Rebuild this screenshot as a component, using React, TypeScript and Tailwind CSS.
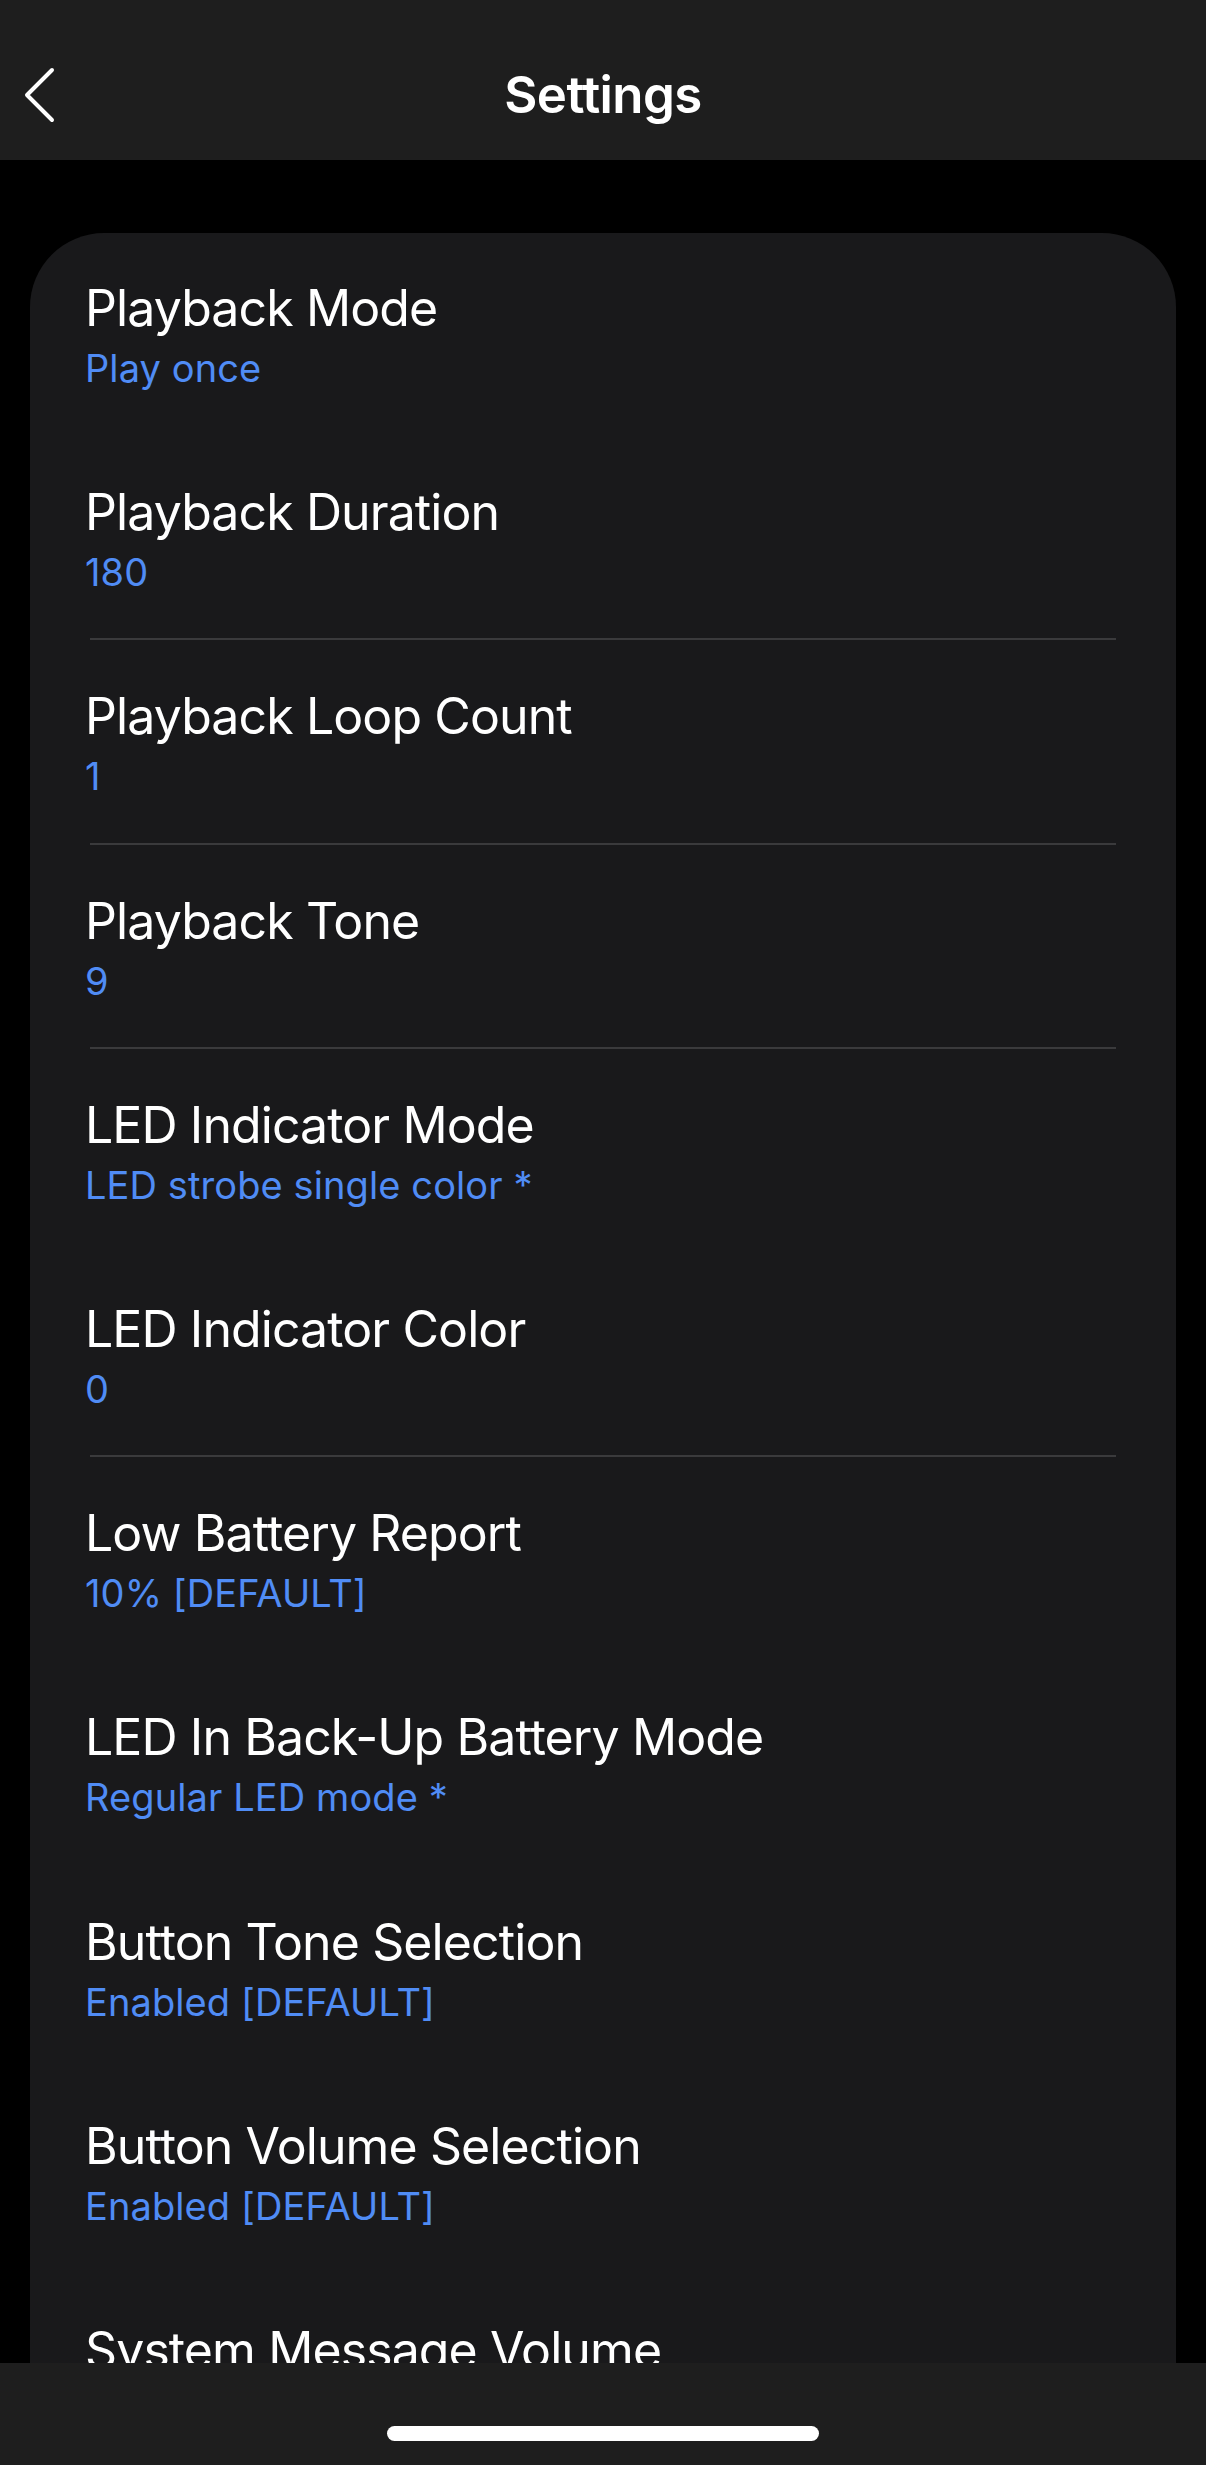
import React from "react";

const rows: { title: string; value: string; divider: boolean }[] = [
  { title: "Playback Mode", value: "Play once", divider: false },
  { title: "Playback Duration", value: "180", divider: true },
  { title: "Playback Loop Count", value: "1", divider: true },
  { title: "Playback Tone", value: "9", divider: true },
  { title: "LED Indicator Mode", value: "LED strobe single color *", divider: false },
  { title: "LED Indicator Color", value: "0", divider: true },
  { title: "Low Battery Report", value: "10% [DEFAULT]", divider: false },
  { title: "LED In Back-Up Battery Mode", value: "Regular LED mode *", divider: false },
  { title: "Button Tone Selection", value: "Enabled [DEFAULT]", divider: false },
  { title: "Button Volume Selection", value: "Enabled [DEFAULT]", divider: false },
  { title: "System Message Volume", value: "", divider: false },
];

export default function App() {
  return (
    <div
      className="h-[2465px] w-[1206px] bg-black flex flex-col overflow-hidden"
      style={{ fontFamily: "Inter, 'Noto Sans', sans-serif" }}
    >
      <header className="h-[160px] shrink-0 bg-[#1e1e1e] flex flex-col justify-end">
        <div className="h-[132px] relative flex items-center justify-center">
          <svg
            className="absolute left-[22px] top-[39px]"
            width="34"
            height="56"
            viewBox="0 0 34 56"
            fill="none"
          >
            <polyline
              points="30,3 5,28 30,53"
              stroke="#ffffff"
              strokeWidth="4"
              strokeLinecap="round"
              strokeLinejoin="round"
            />
          </svg>
          <h1 className="text-white text-[51px] font-semibold tracking-[-0.6px] leading-none">
            Settings
          </h1>
        </div>
      </header>

      <main className="flex-1 min-h-0 overflow-hidden pt-[73px] px-[30px]">
        <div className="bg-[#19191b] rounded-t-[74px] h-full">
          {rows.map((r) => (
            <div key={r.title} className="h-[204.2px] flex flex-col px-[55px]">
              <div className="pt-[45px]">
                <div className="text-white text-[50px] leading-[60px] tracking-[-0.9px] whitespace-nowrap">
                  {r.title}
                </div>
                {r.value && (
                  <div className="mt-[7px] text-[#508cf5] text-[38px] leading-[46px] tracking-[0.1px] whitespace-nowrap">
                    {r.value}
                  </div>
                )}
              </div>
              <div
                className={
                  "mt-auto mb-[1px] mx-[5px] h-[2px] " +
                  (r.divider ? "bg-[#3a3a3c]" : "bg-transparent")
                }
              />
            </div>
          ))}
        </div>
      </main>

      <footer className="h-[102px] shrink-0 bg-[#1e1e1e] flex justify-center">
        <div className="mt-[63px] w-[432px] h-[15px] rounded-full bg-white" />
      </footer>
    </div>
  );
}
